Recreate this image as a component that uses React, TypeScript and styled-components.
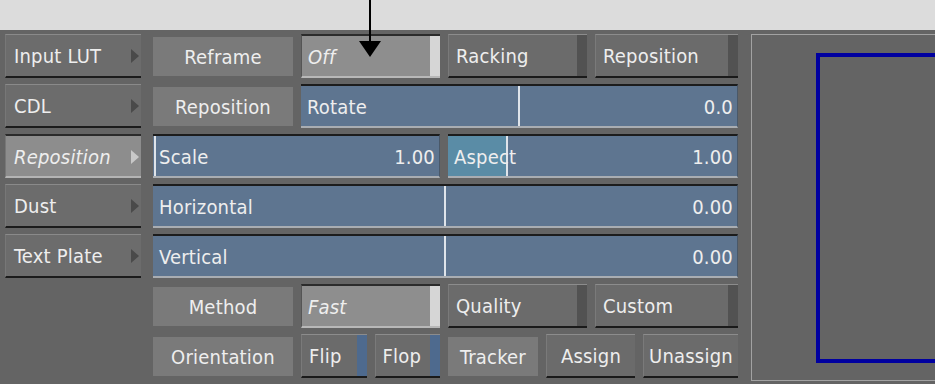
import styled, { createGlobalStyle, css } from 'styled-components'

const GlobalStyle = createGlobalStyle`
  html, body {
    margin: 0;
    padding: 0;
    background: #dcdcdc;
    overflow: hidden;
  }
  body {
    font-family: "DejaVu Sans Condensed", "DejaVu Sans", "Liberation Sans", sans-serif;
  }
`

const NAV_ITEMS = ['Input LUT', 'CDL', 'Reposition', 'Dust', 'Text Plate']
const ACTIVE_NAV = 'Reposition'

type SliderProps = {
  label: string
  value: string
  marker: number
  fill?: boolean
}

// marker is a percentage of the field width
function Slider({ label, value, marker, fill }: SliderProps) {
  return (
    <Field>
      {fill && <Fill style={{ width: `${marker}%` }} />}
      <Divider style={{ left: `${marker}%` }} />
      <FieldText>{label}</FieldText>
      <FieldText>{value}</FieldText>
    </Field>
  )
}

const App = () => {
  return (
    <>
      <GlobalStyle />
      <Page>
        <TopBand />
        <Pointer width="24" height="58" viewBox="0 0 24 58">
          <rect x="10" y="0" width="2" height="44" fill="#000" />
          <polygon points="0,41 22,41 11,57" fill="#000" />
        </Pointer>
        <Panel>
          <NavColumn>
            {NAV_ITEMS.map((item) => (
              <NavButton key={item} $active={item === ACTIVE_NAV}>
                <span>{item}</span>
                <Caret $active={item === ACTIVE_NAV} />
              </NavButton>
            ))}
          </NavColumn>

          <Controls>
            <Label>Reframe</Label>
            <Toggle>Off</Toggle>
            <Button $strip="dark">Racking</Button>
            <Button $strip="dark">Reposition</Button>

            <Label>Reposition</Label>
            <Span $cols={3}>
              <Slider label="Rotate" value="0.0" marker={50} />
            </Span>

            <Span $cols={2}>
              <Slider label="Scale" value="1.00" marker={0.6} />
            </Span>
            <Span $cols={2}>
              <Slider label="Aspect" value="1.00" marker={20.5} fill />
            </Span>

            <Span $cols={4}>
              <Slider label="Horizontal" value="0.00" marker={50} />
            </Span>
            <Span $cols={4}>
              <Slider label="Vertical" value="0.00" marker={50} />
            </Span>

            <Label>Method</Label>
            <Toggle>Fast</Toggle>
            <Button $strip="dark">Quality</Button>
            <Button $strip="dark">Custom</Button>

            <Label>Orientation</Label>
            <SplitRow>
              <Button $strip="blue">Flip</Button>
              <Button $strip="blue">Flop</Button>
            </SplitRow>
            <Span $cols={2}>
              <ActionRow>
                <Label $small>Tracker</Label>
                <Button $center>Assign</Button>
                <Button $center>Unassign</Button>
              </ActionRow>
            </Span>
          </Controls>

          <Viewer>
            <FrameOutline />
          </Viewer>
        </Panel>
      </Page>
    </>
  )
}

const Page = styled.div`
  position: relative;
  width: 935px;
  height: 384px;
  display: flex;
  flex-direction: column;
  color: #eeeeee;
  font-size: 20px;
  letter-spacing: 0.2px;
`

const TopBand = styled.div`
  height: 30px;
  background: #dcdcdc;
`

const Pointer = styled.svg`
  position: absolute;
  left: 359px;
  top: 0;
  z-index: 2;
`

const Panel = styled.div`
  flex: 1;
  display: flex;
  align-items: flex-start;
  background: #646464;
  padding: 4px 0 0 5px;
  overflow: hidden;
`

const NavColumn = styled.div`
  display: flex;
  flex-direction: column;
  gap: 6px;
  width: 136px;
`

const NavButton = styled.div<{ $active?: boolean }>`
  box-sizing: border-box;
  height: 44px;
  display: flex;
  align-items: center;
  justify-content: space-between;
  padding: 1px 2px 0 8px;
  background: #6c6c6c;
  border-top: 1px solid #8a8a8a;
  border-left: 1px solid #777;
  border-bottom: 2px solid #1b1b1b;
  white-space: nowrap;

  ${({ $active }) =>
    $active &&
    css`
      background: #8d8d8d;
      border-top: 2px solid #2a2a2a;
      border-bottom: 2px solid #b4b4b4;
      font-style: italic;
    `}
`

const Caret = styled.span<{ $active?: boolean }>`
  width: 0;
  height: 0;
  border-top: 7px solid transparent;
  border-bottom: 7px solid transparent;
  border-left: 8px solid ${({ $active }) => ($active ? '#c8c8c8' : '#4a4a4a')};
`

const Controls = styled.div`
  display: grid;
  grid-template-columns: 140px 139px 139px 143px;
  grid-auto-rows: 44px;
  column-gap: 8px;
  row-gap: 6px;
  margin-left: 12px;
  width: 585px;
  flex-shrink: 0;
`

const Span = styled.div<{ $cols: number }>`
  grid-column: span ${({ $cols }) => $cols};
  display: flex;
  min-width: 0;
`

const Label = styled.div<{ $small?: boolean }>`
  box-sizing: border-box;
  margin: 3px 0 2px;
  display: flex;
  align-items: center;
  justify-content: center;
  background: #7a7a7a;
  white-space: nowrap;
  ${({ $small }) =>
    $small &&
    css`
      width: 90px;
      flex-shrink: 0;
    `}
`

const Toggle = styled.div`
  box-sizing: border-box;
  display: flex;
  align-items: center;
  padding: 1px 0 0 6px;
  background: #8e8e8e;
  border-top: 2px solid #2b2b2b;
  border-left: 1px solid #555;
  border-bottom: 2px solid #b8b8b8;
  box-shadow: inset -10px 0 0 #d6d6d6;
  font-style: italic;
`

const STRIPS = {
  dark: css`
    box-shadow: inset -10px 0 0 #525252;
  `,
  blue: css`
    box-shadow: inset -10px 0 0 #4e6a8e;
  `,
}

const Button = styled.div<{ $strip?: 'dark' | 'blue'; $center?: boolean }>`
  box-sizing: border-box;
  flex: 1;
  display: flex;
  align-items: center;
  justify-content: ${({ $center }) => ($center ? 'center' : 'flex-start')};
  padding: 1px 0 0 ${({ $center }) => ($center ? '0' : '7px')};
  background: #6b6b6b;
  border-top: 1px solid #8c8c8c;
  border-left: 1px solid #7a7a7a;
  border-bottom: 2px solid #1a1a1a;
  white-space: nowrap;
  ${({ $strip }) => $strip && STRIPS[$strip]}
`

const SplitRow = styled.div`
  display: flex;
  gap: 8px;
`

const ActionRow = styled.div`
  flex: 1;
  display: flex;
  gap: 8px;

  & > :last-child {
    flex: 0 0 95px;
  }
`

const Field = styled.div`
  position: relative;
  box-sizing: border-box;
  flex: 1;
  display: flex;
  align-items: center;
  justify-content: space-between;
  padding: 1px 4px 0 6px;
  background: #5e7590;
  border-top: 2px solid #1c1c1c;
  border-bottom: 2px solid #a9adb2;
  border-right: 1px solid #4a5868;
  overflow: hidden;
`

const Fill = styled.div`
  position: absolute;
  left: 0;
  top: 0;
  bottom: 0;
  background: #5a8ca6;
`

const Divider = styled.div`
  position: absolute;
  top: 0;
  bottom: 0;
  width: 2px;
  margin-left: -1px;
  background: #dfe4ea;
`

const FieldText = styled.span`
  position: relative;
  white-space: nowrap;
`

const Viewer = styled.div`
  box-sizing: border-box;
  margin-left: 13px;
  flex: 1;
  height: 347px;
  border: 1px solid #a2a2a2;
  border-right: none;
  overflow: hidden;
  padding: 18px 0 0 64px;
`

const FrameOutline = styled.div`
  height: 310px;
  width: 300px;
  box-sizing: border-box;
  border: 4px solid #0000a0;
  border-right: none;
`

export default App
